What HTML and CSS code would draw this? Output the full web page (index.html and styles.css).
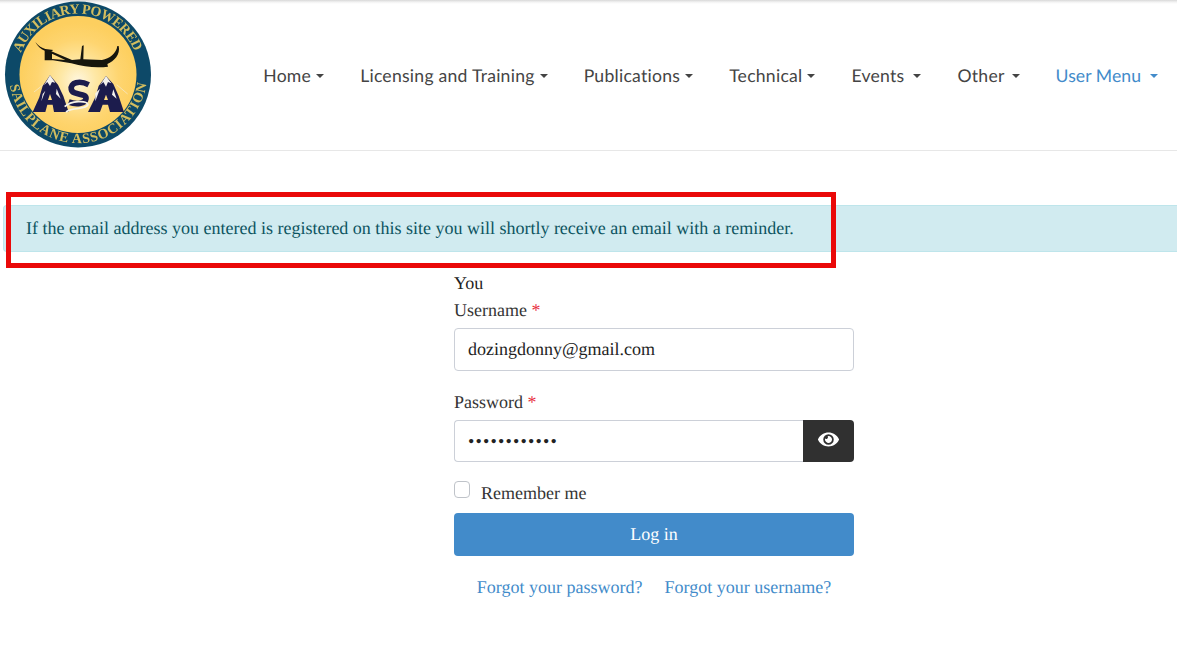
FILE: index.html
```html
<!DOCTYPE html>
<html lang="en">
<head>
<meta charset="utf-8">
<title>Log in</title>
<link rel="stylesheet" href="styles.css">
</head>
<body>
<header class="site-header">
  <a class="logo" href="#" aria-label="Auxiliary Powered Sailplane Association">
    <svg class="logo-svg" viewBox="0 0 156 150" width="156" height="150">
      <defs>
        <radialGradient id="sun" cx="0.5" cy="0.55" r="0.5">
          <stop offset="0" stop-color="#fff6de"/>
          <stop offset="0.3" stop-color="#fee8a6"/>
          <stop offset="0.7" stop-color="#fed570"/>
          <stop offset="1" stop-color="#fdcf5f"/>
        </radialGradient>
        <filter id="soft" x="-5%" y="-5%" width="110%" height="110%"><feGaussianBlur stdDeviation="0.4"/></filter>
        <path id="arc-top" d="M20.9 53 A61 61 0 0 1 134.3 51.1"/>
        <path id="arc-bottom" d="M9.9 85.3 A69 69 0 0 0 146.1 85.3"/>
      </defs>
      <g filter="url(#soft)">
        <circle cx="78" cy="74.5" r="73" fill="#0d4a68"/>
        <circle cx="78" cy="74.5" r="58.5" fill="url(#sun)"/>
        <text class="logo-ring"><textPath href="#arc-top" textLength="146" lengthAdjust="spacing">AUXILIARY POWERED</textPath></text>
        <text class="logo-ring"><textPath href="#arc-bottom" textLength="196" lengthAdjust="spacing">SAILPLANE ASSOCIATION</textPath></text>
        <g transform="translate(28 36) scale(.33333)">
          <path fill="#15120f" d="M22 18 C32 30 42 36 52 39 L76 42 L70 46 L132 72 L157 70 L162 30 L167 28 L166 70 L222 72 C245 68 265 52 268 30 L272 30 C278 55 258 76 238 84 L240 92 C210 96 170 94 130 82 L75 73 L50 73 L50 44 C38 40 28 30 22 18Z"/>
          <path fill="#fedb80" d="M72 53 L72 69 L112 72Z"/>
        </g>
        <g transform="translate(26 72) scale(.33333)">
          <path fill="none" stroke="#f2eee0" stroke-width="2.5" opacity=".75" d="M24 60 L52 38 M272 38 L305 66"/>
          <path fill="#1e1c4e" d="M72 10 L96 38 L112 72 L128 120 L84 120 L80 98 L64 98 L58 120 L20 120 L40 76 L50 42Z"/>
          <path fill="#fedb80" d="M72 66 L78 84 L66 84Z"/>
          <path fill="#f4f2ee" d="M72 10 L88 32 L78 30 L72 42 L64 30 L54 40Z M92 50 L104 80 L90 66Z M50 66 L58 56 L46 88Z"/>
          <path fill="none" stroke="#1e1c4e" stroke-width="17" d="M188 38 C160 24 132 32 136 52 C140 72 182 62 180 80 C178 96 150 98 128 90"/>
          <path fill="#1e1c4e" d="M240 12 L262 36 L278 72 L294 120 L252 120 L246 98 L230 98 L222 120 L186 120 L208 76 L218 42Z"/>
          <path fill="#fedb80" d="M240 68 L246 84 L234 84Z"/>
          <path fill="#f4f2ee" d="M240 12 L256 34 L246 30 L240 44 L232 30 L222 40Z M208 64 L222 50 L208 88Z M262 52 L272 80 L258 68Z"/>
          <path fill="none" stroke="#f6f3ea" stroke-width="5" d="M116 104 C135 86 182 84 186 98 C180 114 140 104 120 120"/>
        </g>
      </g>
    </svg>
  </a>
  <nav class="main-nav">
    <a class="nav-link" href="#">Home<span class="caret"></span></a>
    <a class="nav-link" href="#">Licensing and Training<span class="caret"></span></a>
    <a class="nav-link" href="#">Publications<span class="caret"></span></a>
    <a class="nav-link" href="#">Technical<span class="caret"></span></a>
    <a class="nav-link nav-link-wide" href="#">Events<span class="caret"></span></a>
    <a class="nav-link nav-link-mid" href="#">Other<span class="caret"></span></a>
    <a class="nav-link nav-link-wide nav-link-user" href="#">User Menu<span class="caret"></span></a>
  </nav>
</header>

<main>
  <div class="alert">If the email address you entered is registered on this site you will shortly receive an email with a reminder.</div>
  <div class="highlight-box"></div>

  <form class="login-form">
    <div class="legend">You</div>
    <label class="field-label" for="username">Username <span class="req">*</span></label>
    <input class="text-input" id="username" type="text" value="dozingdonny@gmail.com">
    <label class="field-label field-label-password" for="password">Password <span class="req">*</span></label>
    <div class="input-group">
      <input class="text-input text-input-group" id="password" type="password" value="abcdefghijkl">
      <button class="eye-button" type="button" aria-label="Show password">
        <svg class="eye-icon" viewBox="0 0 576 512" width="21" height="19"><path fill="#fff" d="M572.52 241.4C518.29 135.59 410.93 64 288 64S57.68 135.64 3.48 241.41a32.35 32.35 0 0 0 0 29.19C57.71 376.41 165.07 448 288 448s230.32-71.64 284.52-177.41a32.35 32.35 0 0 0 0-29.19zM288 400a144 144 0 1 1 144-144 143.93 143.93 0 0 1-144 144zm0-240a95.31 95.31 0 0 0-25.31 3.79 47.85 47.85 0 0 1-66.9 66.9A95.78 95.78 0 1 0 288 160z"/></svg>
      </button>
    </div>
    <div class="remember">
      <span class="check-box"></span>
      <label class="remember-label">Remember me</label>
    </div>
    <button class="login-button" type="button">Log in</button>
    <div class="form-links">
      <a href="#">Forgot your password?</a>
      <a href="#">Forgot your username?</a>
    </div>
  </form>
</main>
</body>
</html>
```
FILE: styles.css
```css
* { box-sizing: border-box; }
html, body { margin: 0; padding: 0; background: #fff; }
body {
  font-family: "Liberation Serif", "Times New Roman", serif;
  font-size: 18px;
  color: #343434;
  height: 654px;
  overflow: hidden;
  text-rendering: geometricPrecision;
}
a { text-decoration: none; }

.site-header {
  height: 151px;
  display: flex;
  align-items: center;
  justify-content: space-between;
  padding-right: 19px;
  border-bottom: 1px solid #e7e7e7;
  background: linear-gradient(#d8d8d8, #f2f2f2 2px, #fff 4px);
}
.logo { display: block; height: 150px; }
.logo-svg { display: block; }
.logo-ring {
  font-family: "Liberation Serif", serif;
  font-size: 14px;
  font-weight: 700;
  fill: #d3bd5e;
}
.main-nav { display: flex; gap: 36px; }
.nav-link {
  font-family: Lato, "Open Sans", sans-serif;
  font-size: 17.6px;
  letter-spacing: 0.25px;
  color: #444;
  display: flex;
  align-items: center;
}
.nav-link-user { color: #428bca; letter-spacing: 0.05px; }
.caret {
  width: 0;
  height: 0;
  margin-left: 5px;
  margin-top: 2px;
  border-top: 4px solid currentColor;
  border-left: 4px solid transparent;
  border-right: 4px solid transparent;
}
.nav-link-wide .caret { margin-left: 9px; }
.nav-link-mid .caret { margin-left: 7px; }

.alert {
  margin: 54px 0 0 3px;
  height: 47px;
  padding: 0 0 0 22px;
  display: flex;
  align-items: center;
  background: #d1ebf0;
  border: 1px solid #bee5eb;
  border-right: 0;
  border-radius: 4px 0 0 4px;
  color: #0c5460;
}
.highlight-box {
  position: absolute;
  left: 6px;
  top: 192px;
  width: 830px;
  height: 76px;
  border: 5px solid #ea0909;
}

.login-form { width: 400px; margin: 21px 0 0 454px; }
.legend { line-height: 20px; color: #222; }
.field-label { display: block; line-height: 20px; margin-top: 7px; }
.field-label-password { margin-top: 21px; }
.req { color: #e8303f; }
.text-input {
  display: block;
  width: 400px;
  height: 43px;
  margin-top: 8px;
  padding: 0 13px;
  font: inherit;
  text-rendering: geometricPrecision;
  color: #222;
  border: 1px solid #ccd0d8;
  border-radius: 4px;
  background: #fff;
  outline: none;
}
.input-group { display: flex; margin-top: 8px; height: 42px; }
.text-input-group {
  flex: 1;
  min-width: 0;
  height: 42px;
  margin-top: 0;
  border-right: 0;
  border-radius: 4px 0 0 4px;
  letter-spacing: 1.2px;
}
.eye-button {
  width: 51px;
  padding: 0;
  border: 0;
  border-radius: 0 4px 4px 0;
  background: #303030;
  display: flex;
  align-items: center;
  justify-content: center;
}
.eye-icon { display: block; margin-bottom: 4px; }

.remember { display: flex; height: 30px; margin-top: 17px; }
.check-box {
  width: 16px;
  height: 17px;
  margin-top: 2px;
  border: 1px solid #bfc3c9;
  border-radius: 4px;
  background: #fff;
}
.remember-label { margin-left: 11px; line-height: 28px; }

.login-button {
  display: block;
  width: 400px;
  height: 43px;
  margin-top: 4px;
  border: 0;
  border-radius: 4px;
  background: #428bca;
  color: #fff;
  font: inherit;
  text-rendering: geometricPrecision;
}
.form-links { display: flex; justify-content: center; gap: 22px; margin-top: 21px; line-height: 20px; }
.form-links a { color: #428bca; }
```
